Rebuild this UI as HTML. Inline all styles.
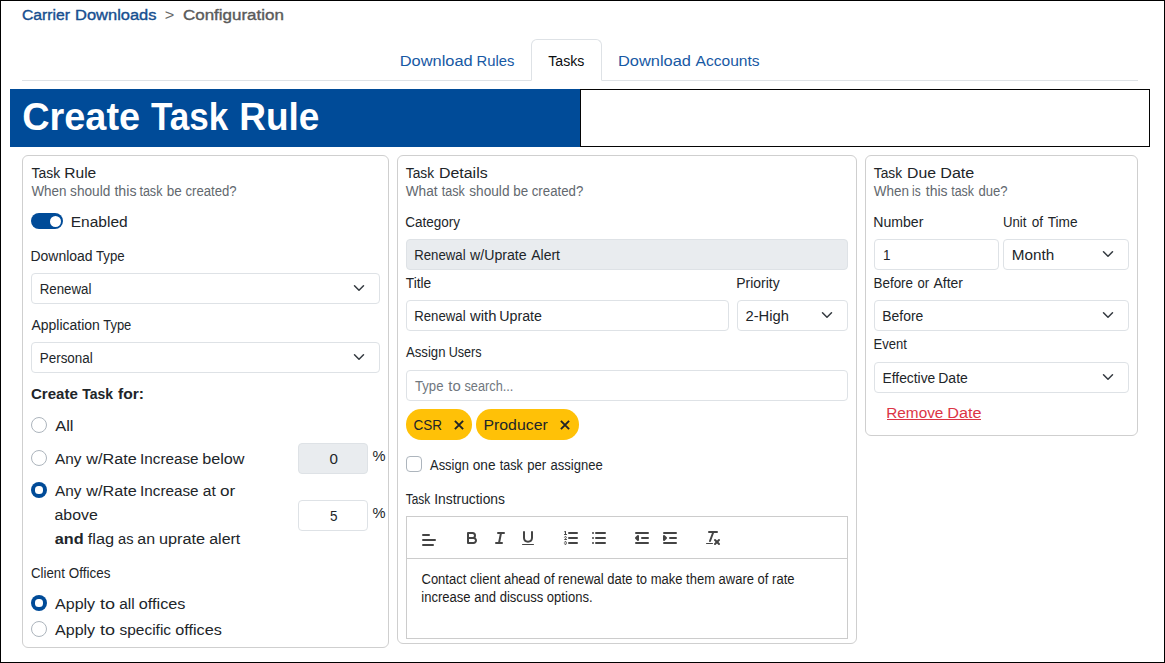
<!DOCTYPE html>
<html lang="en"><head><meta charset="utf-8"><title>Create Task Rule</title>
<style>
html,body{margin:0;padding:0;background:#fff;}
body{width:1165px;height:663px;position:relative;overflow:hidden;font-family:"Liberation Sans",sans-serif;}
#frame{position:absolute;left:0;top:0;width:1165px;height:663px;box-sizing:border-box;border:1px solid #000;z-index:5;pointer-events:none;}
.b{position:absolute;}
.t{position:absolute;white-space:nowrap;transform-origin:0 0;font-family:"Liberation Sans",sans-serif;}
.chev{position:absolute;right:12px;top:50%;margin-top:-7px;}
.qi{position:absolute;overflow:visible;}
</style></head>
<body>
<div id="frame"></div>
<div id="boxes">
<div class="b" style="left:22px;top:80px;width:1116px;height:1px;background:#dee2e6;"></div>
<div class="b" style="left:531px;top:39px;width:71px;height:42px;border:1px solid #dee2e6;border-bottom:1px solid #fff;border-radius:6px 6px 0 0;box-sizing:border-box;background:#fff;"></div>
<div class="b" style="left:10px;top:89px;width:570px;height:58px;background:#004b98;"></div>
<div class="b" style="left:580px;top:89px;width:570px;height:58px;border:1px solid #050505;box-sizing:border-box;background:#fff;"></div>
<div class="b" style="left:22px;top:155px;width:367px;height:493px;border:1px solid #cfcfcf;border-radius:6px;box-sizing:border-box;background:#fff;"></div>
<div class="b" style="left:397px;top:155px;width:460px;height:489px;border:1px solid #cfcfcf;border-radius:6px;box-sizing:border-box;background:#fff;"></div>
<div class="b" style="left:865px;top:155px;width:273px;height:281px;border:1px solid #cfcfcf;border-radius:6px;box-sizing:border-box;background:#fff;"></div>
<div class="b" style="left:31px;top:213px;width:32px;height:16px;background:#004b98;border-radius:8px;"><i style="position:absolute;left:19px;top:2.5px;width:11px;height:11px;border-radius:50%;background:#fff"></i></div>
<div class="b" style="left:31px;top:273px;width:349px;height:31px;border:1px solid #dee2e6;border-radius:4px;box-sizing:border-box;background:#fff;"><svg class="chev" viewBox="0 0 16 16" width="16" height="12"><path fill="none" stroke="#343a40" stroke-linecap="round" stroke-linejoin="round" stroke-width="2" d="m2 5 6 6 6-6"/></svg></div>
<div class="b" style="left:31px;top:342px;width:349px;height:31px;border:1px solid #dee2e6;border-radius:4px;box-sizing:border-box;background:#fff;"><svg class="chev" viewBox="0 0 16 16" width="16" height="12"><path fill="none" stroke="#343a40" stroke-linecap="round" stroke-linejoin="round" stroke-width="2" d="m2 5 6 6 6-6"/></svg></div>
<div class="b" style="left:31px;top:417px;width:16px;height:16px;border-radius:50%;background:#fff;border:1px solid #adb5bd;box-sizing:border-box;"></div>
<div class="b" style="left:31px;top:450px;width:16px;height:16px;border-radius:50%;background:#fff;border:1px solid #adb5bd;box-sizing:border-box;"></div>
<div class="b" style="left:31px;top:482px;width:16px;height:16px;border-radius:50%;background:#004b98;box-sizing:border-box;"><i style="position:absolute;left:4.4px;top:4.4px;width:7.2px;height:7.2px;border-radius:50%;background:#fff"></i></div>
<div class="b" style="left:298px;top:443px;width:70px;height:31px;border:1px solid #dee2e6;border-radius:4px;box-sizing:border-box;background:#e9ecef;"></div>
<div class="b" style="left:298px;top:500px;width:70px;height:31px;border:1px solid #dee2e6;border-radius:4px;box-sizing:border-box;background:#fff;"></div>
<div class="b" style="left:31px;top:595px;width:16px;height:16px;border-radius:50%;background:#004b98;box-sizing:border-box;"><i style="position:absolute;left:4.4px;top:4.4px;width:7.2px;height:7.2px;border-radius:50%;background:#fff"></i></div>
<div class="b" style="left:31px;top:621px;width:16px;height:16px;border-radius:50%;background:#fff;border:1px solid #adb5bd;box-sizing:border-box;"></div>
<div class="b" style="left:406px;top:239px;width:442px;height:31px;border:1px solid #dee2e6;border-radius:4px;box-sizing:border-box;background:#e9ecef;"></div>
<div class="b" style="left:406px;top:300px;width:323px;height:31px;border:1px solid #dee2e6;border-radius:4px;box-sizing:border-box;background:#fff;"></div>
<div class="b" style="left:737px;top:300px;width:111px;height:31px;border:1px solid #dee2e6;border-radius:4px;box-sizing:border-box;background:#fff;"><svg class="chev" viewBox="0 0 16 16" width="16" height="12"><path fill="none" stroke="#343a40" stroke-linecap="round" stroke-linejoin="round" stroke-width="2" d="m2 5 6 6 6-6"/></svg></div>
<div class="b" style="left:406px;top:370px;width:442px;height:31px;border:1px solid #dee2e6;border-radius:4px;box-sizing:border-box;background:#fff;"></div>
<div class="b" style="left:406px;top:409px;width:65.5px;height:30.5px;background:#ffc107;border-radius:15.25px;"><svg style="position:absolute;left:47.00px;top:9.95px" width="12" height="12" viewBox="0 0 12 12"><path d="M1.9 1.9 L10.1 10.1 M10.1 1.9 L1.9 10.1" stroke="#1f2327" stroke-width="1.9" stroke-linecap="butt" fill="none"/></svg></div>
<div class="b" style="left:475.5px;top:409px;width:103.5px;height:30.5px;background:#ffc107;border-radius:15.25px;"><svg style="position:absolute;left:83.50px;top:9.95px" width="12" height="12" viewBox="0 0 12 12"><path d="M1.9 1.9 L10.1 10.1 M10.1 1.9 L1.9 10.1" stroke="#1f2327" stroke-width="1.9" stroke-linecap="butt" fill="none"/></svg></div>
<div class="b" style="left:406px;top:456px;width:16px;height:16px;border:1px solid #adb5bd;border-radius:4px;box-sizing:border-box;background:#fff;"></div>
<div class="b" style="left:406px;top:516px;width:442px;height:43px;border:1px solid #ccc;box-sizing:border-box;background:#fff;"></div>
<div class="b" style="left:406px;top:558px;width:442px;height:81px;border:1px solid #ccc;box-sizing:border-box;background:#fff;"></div>
<svg class="qi" style="left:419.75px;top:531px" width="18" height="18" viewBox="0 0 18 18"><line fill="none" stroke="#444" stroke-linecap="round" stroke-linejoin="round" stroke-width="2" x1="3" x2="15" y1="9" y2="9"/><line fill="none" stroke="#444" stroke-linecap="round" stroke-linejoin="round" stroke-width="2" x1="3" x2="13" y1="14" y2="14"/><line fill="none" stroke="#444" stroke-linecap="round" stroke-linejoin="round" stroke-width="2" x1="3" x2="9" y1="4" y2="4"/></svg>
<svg class="qi" style="left:463px;top:528.75px" width="18" height="18" viewBox="0 0 18 18"><path fill="none" stroke="#444" stroke-linecap="round" stroke-linejoin="round" stroke-width="2" d="M5,4H9.5A2.5,2.5,0,0,1,12,6.5v0A2.5,2.5,0,0,1,9.5,9H5A0,0,0,0,1,5,9V4A0,0,0,0,1,5,4Z"/><path fill="none" stroke="#444" stroke-linecap="round" stroke-linejoin="round" stroke-width="2" d="M5,9h5.5A2.5,2.5,0,0,1,13,11.5v0A2.5,2.5,0,0,1,10.5,14H5a0,0,0,0,1,0,0V9A0,0,0,0,1,5,9Z"/></svg>
<svg class="qi" style="left:491px;top:528.75px" width="18" height="18" viewBox="0 0 18 18"><line fill="none" stroke="#444" stroke-linecap="round" stroke-linejoin="round" stroke-width="2" x1="7" x2="13" y1="4" y2="4"/><line fill="none" stroke="#444" stroke-linecap="round" stroke-linejoin="round" stroke-width="2" x1="5" x2="11" y1="14" y2="14"/><line fill="none" stroke="#444" stroke-linecap="round" stroke-linejoin="round" stroke-width="2" x1="8" x2="10" y1="14" y2="4"/></svg>
<svg class="qi" style="left:519px;top:528.75px" width="18" height="18" viewBox="0 0 18 18"><path fill="none" stroke="#444" stroke-linecap="round" stroke-linejoin="round" stroke-width="2" d="M5,3V9a4.012,4.012,0,0,0,8,0V3"/><rect fill="#444" height="1" rx="0.5" ry="0.5" width="12" x="3" y="15"/></svg>
<svg class="qi" style="left:562px;top:528.75px" width="18" height="18" viewBox="0 0 18 18"><line fill="none" stroke="#444" stroke-linecap="round" stroke-linejoin="round" stroke-width="2" x1="7" x2="15" y1="4" y2="4"/><line fill="none" stroke="#444" stroke-linecap="round" stroke-linejoin="round" stroke-width="2" x1="7" x2="15" y1="9" y2="9"/><line fill="none" stroke="#444" stroke-linecap="round" stroke-linejoin="round" stroke-width="2" x1="7" x2="15" y1="14" y2="14"/><line fill="none" stroke="#444" stroke-linecap="round" stroke-linejoin="round" stroke-width="1" x1="2.5" x2="4.5" y1="5.5" y2="5.5"/><path fill="#444" d="M3.5,6A0.5,0.5,0,0,1,3,5.5V3.085l-0.276.138A0.5,0.5,0,0,1,2.053,3c-0.124-.247-0.023-0.324.224-0.447l1-.5A0.5,0.5,0,0,1,4,2.5v3A0.5,0.5,0,0,1,3.5,6Z"/><path fill="none" stroke="#444" stroke-linecap="round" stroke-linejoin="round" stroke-width="1" d="M4.5,10.5h-2c0-.234,1.85-1.076,1.85-2.234A0.959,0.959,0,0,0,2.5,8.156"/><path fill="none" stroke="#444" stroke-linecap="round" stroke-linejoin="round" stroke-width="1" d="M2.5,14.846a0.959,0.959,0,0,0,1.85-.109A0.7,0.7,0,0,0,3.75,14a0.688,0.688,0,0,0,.6-0.736,0.959,0.959,0,0,0-1.85-.109"/></svg>
<svg class="qi" style="left:590px;top:528.75px" width="18" height="18" viewBox="0 0 18 18"><line fill="none" stroke="#444" stroke-linecap="round" stroke-linejoin="round" stroke-width="2" x1="6" x2="15" y1="4" y2="4"/><line fill="none" stroke="#444" stroke-linecap="round" stroke-linejoin="round" stroke-width="2" x1="6" x2="15" y1="9" y2="9"/><line fill="none" stroke="#444" stroke-linecap="round" stroke-linejoin="round" stroke-width="2" x1="6" x2="15" y1="14" y2="14"/><line fill="none" stroke="#444" stroke-linecap="round" stroke-linejoin="round" stroke-width="2" x1="3" x2="3" y1="4" y2="4"/><line fill="none" stroke="#444" stroke-linecap="round" stroke-linejoin="round" stroke-width="2" x1="3" x2="3" y1="9" y2="9"/><line fill="none" stroke="#444" stroke-linecap="round" stroke-linejoin="round" stroke-width="2" x1="3" x2="3" y1="14" y2="14"/></svg>
<svg class="qi" style="left:633px;top:528.75px" width="18" height="18" viewBox="0 0 18 18"><line fill="none" stroke="#444" stroke-linecap="round" stroke-linejoin="round" stroke-width="2" x1="3" x2="15" y1="14" y2="14"/><line fill="none" stroke="#444" stroke-linecap="round" stroke-linejoin="round" stroke-width="2" x1="3" x2="15" y1="4" y2="4"/><line fill="none" stroke="#444" stroke-linecap="round" stroke-linejoin="round" stroke-width="2" x1="9" x2="15" y1="9" y2="9"/><polyline fill="none" stroke="#444" stroke-linecap="round" stroke-linejoin="round" stroke-width="2" points="5 7 5 11 3 9 5 7"/></svg>
<svg class="qi" style="left:661px;top:528.75px" width="18" height="18" viewBox="0 0 18 18"><line fill="none" stroke="#444" stroke-linecap="round" stroke-linejoin="round" stroke-width="2" x1="3" x2="15" y1="14" y2="14"/><line fill="none" stroke="#444" stroke-linecap="round" stroke-linejoin="round" stroke-width="2" x1="3" x2="15" y1="4" y2="4"/><line fill="none" stroke="#444" stroke-linecap="round" stroke-linejoin="round" stroke-width="2" x1="9" x2="15" y1="9" y2="9"/><polyline fill="#444" stroke="#444" stroke-linecap="round" stroke-linejoin="round" stroke-width="2" points="3 7 3 11 5 9 3 7"/></svg>
<svg class="qi" style="left:704px;top:528.75px" width="18" height="18" viewBox="0 0 18 18"><line fill="none" stroke="#444" stroke-linecap="round" stroke-linejoin="round" stroke-width="2" x1="5" x2="13" y1="3" y2="3"/><line fill="none" stroke="#444" stroke-linecap="round" stroke-linejoin="round" stroke-width="2" x1="6" x2="9.35" y1="12" y2="3"/><line fill="none" stroke="#444" stroke-linecap="round" stroke-linejoin="round" stroke-width="2" x1="11" x2="15" y1="11" y2="15"/><line fill="none" stroke="#444" stroke-linecap="round" stroke-linejoin="round" stroke-width="2" x1="15" x2="11" y1="11" y2="15"/><rect fill="#444" height="1" rx="0.5" ry="0.5" width="7" x="2" y="14"/></svg>
<div class="b" style="left:874px;top:239px;width:125px;height:31px;border:1px solid #dee2e6;border-radius:4px;box-sizing:border-box;background:#fff;"></div>
<div class="b" style="left:1003px;top:239px;width:126px;height:31px;border:1px solid #dee2e6;border-radius:4px;box-sizing:border-box;background:#fff;"><svg class="chev" viewBox="0 0 16 16" width="16" height="12"><path fill="none" stroke="#343a40" stroke-linecap="round" stroke-linejoin="round" stroke-width="2" d="m2 5 6 6 6-6"/></svg></div>
<div class="b" style="left:874px;top:300px;width:255px;height:31px;border:1px solid #dee2e6;border-radius:4px;box-sizing:border-box;background:#fff;"><svg class="chev" viewBox="0 0 16 16" width="16" height="12"><path fill="none" stroke="#343a40" stroke-linecap="round" stroke-linejoin="round" stroke-width="2" d="m2 5 6 6 6-6"/></svg></div>
<div class="b" style="left:874px;top:362px;width:255px;height:31px;border:1px solid #dee2e6;border-radius:4px;box-sizing:border-box;background:#fff;"><svg class="chev" viewBox="0 0 16 16" width="16" height="12"><path fill="none" stroke="#343a40" stroke-linecap="round" stroke-linejoin="round" stroke-width="2" d="m2 5 6 6 6-6"/></svg></div>
<div class="b" style="left:887px;top:419px;width:94px;height:1px;background:#dc3545;"></div>
</div>
<div id="texts">
<div class="t" id="crumb1a" style="left:0;top:5px;font-size:15.5px;line-height:20px;font-weight:400;color:#174f90;transform:translateX(21.95px) scaleX(1.0125);-webkit-text-stroke:0.4px currentColor;">Carrier</div>
<div class="t" id="crumb1b" style="left:0;top:5px;font-size:15.5px;line-height:20px;font-weight:400;color:#174f90;transform:translateX(75.10px) scaleX(1.0611);-webkit-text-stroke:0.4px currentColor;">Downloads</div>
<div class="t" id="crumbgt" style="left:0;top:6px;font-size:14px;line-height:18px;font-weight:400;color:#6a6a6a;transform:translateX(164.75px) scaleX(1.1653);">&gt;</div>
<div class="t" id="crumb2" style="left:0;top:5px;font-size:15.5px;line-height:20px;font-weight:400;color:#5a5a5a;transform:translateX(182.95px) scaleX(1.0942);-webkit-text-stroke:0.4px currentColor;">Configuration</div>
<div class="t" id="tab11" style="left:0;top:51px;font-size:15.5px;line-height:20px;font-weight:400;color:#1759a4;transform:translateX(399.75px) scaleX(1.0585);">Download</div>
<div class="t" id="tab12" style="left:0;top:51px;font-size:15.5px;line-height:20px;font-weight:400;color:#1759a4;transform:translateX(476.50px) scaleX(0.9551);">Rules</div>
<div class="t" id="tab2" style="left:0;top:51px;font-size:15.5px;line-height:20px;font-weight:400;color:#0b0d0f;transform:translateX(548.25px) scaleX(0.9132);">Tasks</div>
<div class="t" id="tab31" style="left:0;top:51px;font-size:15.5px;line-height:20px;font-weight:400;color:#1759a4;transform:translateX(618.00px) scaleX(1.0587);">Download</div>
<div class="t" id="tab32" style="left:0;top:51px;font-size:15.5px;line-height:20px;font-weight:400;color:#1759a4;transform:translateX(695.50px) scaleX(1.0056);">Accounts</div>
<div class="t" id="title1" style="left:0;top:92px;font-size:39px;line-height:49px;font-weight:700;color:#ffffff;transform:translateX(22.25px) scaleX(0.9704);">Create</div>
<div class="t" id="title2" style="left:0;top:92px;font-size:39px;line-height:49px;font-weight:700;color:#ffffff;transform:translateX(151.05px) scaleX(0.8983);">Task</div>
<div class="t" id="title3" style="left:0;top:92px;font-size:39px;line-height:49px;font-weight:700;color:#ffffff;transform:translateX(239.20px) scaleX(0.9483);">Rule</div>
<div class="t" id="c1h1" style="left:0;top:163px;font-size:15.5px;line-height:20px;font-weight:400;color:#212529;transform:translateX(31.50px) scaleX(0.8977);">Task</div>
<div class="t" id="c1h2" style="left:0;top:163px;font-size:15.5px;line-height:20px;font-weight:400;color:#212529;transform:translateX(64.25px) scaleX(1.0046);">Rule</div>
<div class="t" id="c1s1" style="left:0;top:182px;font-size:14px;line-height:18px;font-weight:400;color:#62686e;transform:translateX(31.40px) scaleX(0.9589);">When</div>
<div class="t" id="c1s2" style="left:0;top:182px;font-size:14px;line-height:18px;font-weight:400;color:#62686e;transform:translateX(70.10px) scaleX(0.9757);">should</div>
<div class="t" id="c1s3" style="left:0;top:182px;font-size:14px;line-height:18px;font-weight:400;color:#62686e;transform:translateX(114.40px) scaleX(1.0129);">this</div>
<div class="t" id="c1s4" style="left:0;top:182px;font-size:14px;line-height:18px;font-weight:400;color:#62686e;transform:translateX(139.40px) scaleX(0.8966);">task</div>
<div class="t" id="c1s5" style="left:0;top:182px;font-size:14px;line-height:18px;font-weight:400;color:#62686e;transform:translateX(166.65px) scaleX(0.9618);">be</div>
<div class="t" id="c1s6" style="left:0;top:182px;font-size:14px;line-height:18px;font-weight:400;color:#62686e;transform:translateX(185.50px) scaleX(0.9380);">created?</div>
<div class="t" id="enabled" style="left:0;top:212px;font-size:15.5px;line-height:20px;font-weight:400;color:#212529;transform:translateX(70.75px) scaleX(1.0013);">Enabled</div>
<div class="t" id="dltype1" style="left:0;top:247px;font-size:14px;line-height:18px;font-weight:400;color:#212529;transform:translateX(30.50px) scaleX(0.9965);">Download</div>
<div class="t" id="dltype2" style="left:0;top:247px;font-size:14px;line-height:18px;font-weight:400;color:#212529;transform:translateX(96.00px) scaleX(0.9443);">Type</div>
<div class="t" id="renewal" style="left:0;top:280px;font-size:14px;line-height:18px;font-weight:400;color:#212529;transform:translateX(39.75px) scaleX(0.9484);">Renewal</div>
<div class="t" id="apptype1" style="left:0;top:316px;font-size:14px;line-height:18px;font-weight:400;color:#212529;transform:translateX(31.50px) scaleX(0.9981);">Application</div>
<div class="t" id="apptype2" style="left:0;top:316px;font-size:14px;line-height:18px;font-weight:400;color:#212529;transform:translateX(103.25px) scaleX(0.9239);">Type</div>
<div class="t" id="personal" style="left:0;top:349px;font-size:14px;line-height:18px;font-weight:400;color:#212529;transform:translateX(39.75px) scaleX(0.9586);">Personal</div>
<div class="t" id="ctf1" style="left:0;top:384px;font-size:15.5px;line-height:20px;font-weight:700;color:#212529;transform:translateX(31.00px) scaleX(0.9711);">Create</div>
<div class="t" id="ctf2" style="left:0;top:384px;font-size:15.5px;line-height:20px;font-weight:700;color:#212529;transform:translateX(82.25px) scaleX(0.9021);">Task</div>
<div class="t" id="ctf3" style="left:0;top:384px;font-size:15.5px;line-height:20px;font-weight:700;color:#212529;transform:translateX(118.00px) scaleX(1.0083);">for:</div>
<div class="t" id="all" style="left:0;top:416px;font-size:15.5px;line-height:20px;font-weight:400;color:#212529;transform:translateX(55.25px) scaleX(1.0606);">All</div>
<div class="t" id="below1" style="left:0;top:449px;font-size:15.5px;line-height:20px;font-weight:400;color:#212529;transform:translateX(55.00px) scaleX(0.9889);">Any</div>
<div class="t" id="below2" style="left:0;top:449px;font-size:15.5px;line-height:20px;font-weight:400;color:#212529;transform:translateX(86.25px) scaleX(1.0453);">w/Rate</div>
<div class="t" id="below3" style="left:0;top:449px;font-size:15.5px;line-height:20px;font-weight:400;color:#212529;transform:translateX(140.00px) scaleX(0.9855);">Increase</div>
<div class="t" id="below4" style="left:0;top:449px;font-size:15.5px;line-height:20px;font-weight:400;color:#212529;transform:translateX(202.25px) scaleX(1.0448);">below</div>
<div class="t" id="ator1" style="left:0;top:481px;font-size:15.5px;line-height:20px;font-weight:400;color:#212529;transform:translateX(55.00px) scaleX(0.9889);">Any</div>
<div class="t" id="ator2" style="left:0;top:481px;font-size:15.5px;line-height:20px;font-weight:400;color:#212529;transform:translateX(86.25px) scaleX(1.0453);">w/Rate</div>
<div class="t" id="ator3" style="left:0;top:481px;font-size:15.5px;line-height:20px;font-weight:400;color:#212529;transform:translateX(140.00px) scaleX(0.9855);">Increase</div>
<div class="t" id="ator4" style="left:0;top:481px;font-size:15.5px;line-height:20px;font-weight:400;color:#212529;transform:translateX(202.75px) scaleX(1.0070);">at</div>
<div class="t" id="ator5" style="left:0;top:481px;font-size:15.5px;line-height:20px;font-weight:400;color:#212529;transform:translateX(220.00px) scaleX(1.1048);">or</div>
<div class="t" id="above" style="left:0;top:505px;font-size:15.5px;line-height:20px;font-weight:400;color:#212529;transform:translateX(54.50px) scaleX(1.0250);">above</div>
<div class="t" id="and" style="left:0;top:529px;font-size:15.5px;line-height:20px;font-weight:700;color:#212529;transform:translateX(54.75px) scaleX(1.0481);">and</div>
<div class="t" id="flag1" style="left:0;top:529px;font-size:15.5px;line-height:20px;font-weight:400;color:#212529;transform:translateX(87.75px) scaleX(1.0526);">flag</div>
<div class="t" id="flag2" style="left:0;top:529px;font-size:15.5px;line-height:20px;font-weight:400;color:#212529;transform:translateX(118.00px) scaleX(0.9440);">as</div>
<div class="t" id="flag3" style="left:0;top:529px;font-size:15.5px;line-height:20px;font-weight:400;color:#212529;transform:translateX(137.25px) scaleX(1.0323);">an</div>
<div class="t" id="flag4" style="left:0;top:529px;font-size:15.5px;line-height:20px;font-weight:400;color:#212529;transform:translateX(159.00px) scaleX(1.0498);">uprate</div>
<div class="t" id="flag5" style="left:0;top:529px;font-size:15.5px;line-height:20px;font-weight:400;color:#212529;transform:translateX(209.25px) scaleX(1.0275);">alert</div>
<div class="t" id="v0" style="left:0;top:450px;font-size:14px;line-height:18px;font-weight:400;color:#212529;transform:translateX(329.60px) scaleX(1.0839);">0</div>
<div class="t" id="pct0" style="left:0;top:446px;font-size:15.5px;line-height:20px;font-weight:400;color:#212529;transform:translateX(372.50px) scaleX(0.9446);">%</div>
<div class="t" id="v5" style="left:0;top:507px;font-size:14px;line-height:18px;font-weight:400;color:#212529;transform:translateX(329.95px) scaleX(0.9651);">5</div>
<div class="t" id="pct5" style="left:0;top:503px;font-size:15.5px;line-height:20px;font-weight:400;color:#212529;transform:translateX(372.50px) scaleX(0.9446);">%</div>
<div class="t" id="coff1" style="left:0;top:564px;font-size:14px;line-height:18px;font-weight:400;color:#212529;transform:translateX(31.00px) scaleX(0.9448);">Client</div>
<div class="t" id="coff2" style="left:0;top:564px;font-size:14px;line-height:18px;font-weight:400;color:#212529;transform:translateX(68.75px) scaleX(0.9615);">Offices</div>
<div class="t" id="applyall1" style="left:0;top:594px;font-size:15.5px;line-height:20px;font-weight:400;color:#212529;transform:translateX(55.00px) scaleX(1.0352);">Apply</div>
<div class="t" id="applyall2" style="left:0;top:594px;font-size:15.5px;line-height:20px;font-weight:400;color:#212529;transform:translateX(100.00px) scaleX(1.1636);">to</div>
<div class="t" id="applyall3" style="left:0;top:594px;font-size:15.5px;line-height:20px;font-weight:400;color:#212529;transform:translateX(119.25px) scaleX(0.9937);">all</div>
<div class="t" id="applyall4" style="left:0;top:594px;font-size:15.5px;line-height:20px;font-weight:400;color:#212529;transform:translateX(138.75px) scaleX(1.0486);">offices</div>
<div class="t" id="applyspec1" style="left:0;top:620px;font-size:15.5px;line-height:20px;font-weight:400;color:#212529;transform:translateX(55.00px) scaleX(1.0352);">Apply</div>
<div class="t" id="applyspec2" style="left:0;top:620px;font-size:15.5px;line-height:20px;font-weight:400;color:#212529;transform:translateX(100.00px) scaleX(1.1636);">to</div>
<div class="t" id="applyspec3" style="left:0;top:620px;font-size:15.5px;line-height:20px;font-weight:400;color:#212529;transform:translateX(119.50px) scaleX(0.9981);">specific</div>
<div class="t" id="applyspec4" style="left:0;top:620px;font-size:15.5px;line-height:20px;font-weight:400;color:#212529;transform:translateX(175.25px) scaleX(1.0475);">offices</div>
<div class="t" id="c2h1" style="left:0;top:163px;font-size:15.5px;line-height:20px;font-weight:400;color:#212529;transform:translateX(405.75px) scaleX(0.8889);">Task</div>
<div class="t" id="c2h2" style="left:0;top:163px;font-size:15.5px;line-height:20px;font-weight:400;color:#212529;transform:translateX(439.00px) scaleX(1.0264);">Details</div>
<div class="t" id="c2s1" style="left:0;top:182px;font-size:14px;line-height:18px;font-weight:400;color:#62686e;transform:translateX(405.75px) scaleX(0.9740);">What</div>
<div class="t" id="c2s2" style="left:0;top:182px;font-size:14px;line-height:18px;font-weight:400;color:#62686e;transform:translateX(441.75px) scaleX(0.8953);">task</div>
<div class="t" id="c2s3" style="left:0;top:182px;font-size:14px;line-height:18px;font-weight:400;color:#62686e;transform:translateX(469.25px) scaleX(0.9758);">should</div>
<div class="t" id="c2s4" style="left:0;top:182px;font-size:14px;line-height:18px;font-weight:400;color:#62686e;transform:translateX(513.25px) scaleX(0.9538);">be</div>
<div class="t" id="c2s5" style="left:0;top:182px;font-size:14px;line-height:18px;font-weight:400;color:#62686e;transform:translateX(531.75px) scaleX(0.9452);">created?</div>
<div class="t" id="cat" style="left:0;top:213px;font-size:14px;line-height:18px;font-weight:400;color:#212529;transform:translateX(405.25px) scaleX(0.9656);">Category</div>
<div class="t" id="catv1" style="left:0;top:246px;font-size:14px;line-height:18px;font-weight:400;color:#212529;transform:translateX(414.25px) scaleX(0.9418);">Renewal</div>
<div class="t" id="catv2" style="left:0;top:246px;font-size:14px;line-height:18px;font-weight:400;color:#212529;transform:translateX(470.00px) scaleX(1.0118);">w/Uprate</div>
<div class="t" id="catv3" style="left:0;top:246px;font-size:14px;line-height:18px;font-weight:400;color:#212529;transform:translateX(531.25px) scaleX(0.9986);">Alert</div>
<div class="t" id="titlel" style="left:0;top:274px;font-size:14px;line-height:18px;font-weight:400;color:#212529;transform:translateX(405.75px) scaleX(0.9809);">Title</div>
<div class="t" id="prio" style="left:0;top:274px;font-size:14px;line-height:18px;font-weight:400;color:#212529;transform:translateX(736.25px) scaleX(0.9952);">Priority</div>
<div class="t" id="titlev1" style="left:0;top:307px;font-size:14px;line-height:18px;font-weight:400;color:#212529;transform:translateX(414.25px) scaleX(0.9418);">Renewal</div>
<div class="t" id="titlev2" style="left:0;top:307px;font-size:14px;line-height:18px;font-weight:400;color:#212529;transform:translateX(470.00px) scaleX(1.0595);">with</div>
<div class="t" id="titlev3" style="left:0;top:307px;font-size:14px;line-height:18px;font-weight:400;color:#212529;transform:translateX(499.25px) scaleX(1.0141);">Uprate</div>
<div class="t" id="priov" style="left:0;top:307px;font-size:14px;line-height:18px;font-weight:400;color:#212529;transform:translateX(745.50px) scaleX(1.0525);">2-High</div>
<div class="t" id="assign1" style="left:0;top:343px;font-size:14px;line-height:18px;font-weight:400;color:#212529;transform:translateX(406.00px) scaleX(0.9392);">Assign</div>
<div class="t" id="assign2" style="left:0;top:343px;font-size:14px;line-height:18px;font-weight:400;color:#212529;transform:translateX(448.75px) scaleX(0.8980);">Users</div>
<div class="t" id="search1" style="left:0;top:377px;font-size:14px;line-height:18px;font-weight:400;color:#70777e;transform:translateX(415.00px) scaleX(0.9386);">Type</div>
<div class="t" id="search2" style="left:0;top:377px;font-size:14px;line-height:18px;font-weight:400;color:#70777e;transform:translateX(448.25px) scaleX(1.0647);">to</div>
<div class="t" id="search3" style="left:0;top:377px;font-size:14px;line-height:18px;font-weight:400;color:#70777e;transform:translateX(464.50px) scaleX(0.9105);">search...</div>
<div class="t" id="csr" style="left:0;top:415px;font-size:15.5px;line-height:20px;font-weight:400;color:#212529;transform:translateX(413.50px) scaleX(0.8698);">CSR</div>
<div class="t" id="producer" style="left:0;top:415px;font-size:15.5px;line-height:20px;font-weight:400;color:#212529;transform:translateX(483.50px) scaleX(1.0207);">Producer</div>
<div class="t" id="onetask1" style="left:0;top:456px;font-size:14px;line-height:18px;font-weight:400;color:#212529;transform:translateX(430.00px) scaleX(0.9241);">Assign</div>
<div class="t" id="onetask2" style="left:0;top:456px;font-size:14px;line-height:18px;font-weight:400;color:#212529;transform:translateX(472.75px) scaleX(0.9745);">one</div>
<div class="t" id="onetask3" style="left:0;top:456px;font-size:14px;line-height:18px;font-weight:400;color:#212529;transform:translateX(499.75px) scaleX(0.8953);">task</div>
<div class="t" id="onetask4" style="left:0;top:456px;font-size:14px;line-height:18px;font-weight:400;color:#212529;transform:translateX(527.25px) scaleX(0.9335);">per</div>
<div class="t" id="onetask5" style="left:0;top:456px;font-size:14px;line-height:18px;font-weight:400;color:#212529;transform:translateX(550.50px) scaleX(0.9303);">assignee</div>
<div class="t" id="instr1" style="left:0;top:490px;font-size:14px;line-height:18px;font-weight:400;color:#212529;transform:translateX(405.75px) scaleX(0.8463);">Task</div>
<div class="t" id="instr2" style="left:0;top:490px;font-size:14px;line-height:18px;font-weight:400;color:#212529;transform:translateX(434.25px) scaleX(0.9881);">Instructions</div>
<div class="t" id="ed1" style="left:0;top:570px;font-size:14px;line-height:18px;font-weight:400;color:#1c1c1c;transform:translateX(421.50px) scaleX(0.9288);">Contact client ahead of renewal date to make them aware of rate</div>
<div class="t" id="ed2" style="left:0;top:588px;font-size:14px;line-height:18px;font-weight:400;color:#1c1c1c;transform:translateX(421.25px) scaleX(0.9329);">increase and discuss options.</div>
<div class="t" id="c3h1" style="left:0;top:163px;font-size:15.5px;line-height:20px;font-weight:400;color:#212529;transform:translateX(873.75px) scaleX(0.8889);">Task</div>
<div class="t" id="c3h2" style="left:0;top:163px;font-size:15.5px;line-height:20px;font-weight:400;color:#212529;transform:translateX(907.00px) scaleX(1.0197);">Due</div>
<div class="t" id="c3h3" style="left:0;top:163px;font-size:15.5px;line-height:20px;font-weight:400;color:#212529;transform:translateX(940.25px) scaleX(1.0409);">Date</div>
<div class="t" id="c3s1" style="left:0;top:182px;font-size:14px;line-height:18px;font-weight:400;color:#62686e;transform:translateX(873.75px) scaleX(0.9632);">When</div>
<div class="t" id="c3s2" style="left:0;top:182px;font-size:14px;line-height:18px;font-weight:400;color:#62686e;transform:translateX(912.05px) scaleX(0.8467);">is</div>
<div class="t" id="c3s3" style="left:0;top:182px;font-size:14px;line-height:18px;font-weight:400;color:#62686e;transform:translateX(925.75px) scaleX(1.0013);">this</div>
<div class="t" id="c3s4" style="left:0;top:182px;font-size:14px;line-height:18px;font-weight:400;color:#62686e;transform:translateX(951.25px) scaleX(0.8854);">task</div>
<div class="t" id="c3s5" style="left:0;top:182px;font-size:14px;line-height:18px;font-weight:400;color:#62686e;transform:translateX(978.50px) scaleX(0.9343);">due?</div>
<div class="t" id="num" style="left:0;top:213px;font-size:14px;line-height:18px;font-weight:400;color:#212529;transform:translateX(873.25px) scaleX(1.0065);">Number</div>
<div class="t" id="unit1" style="left:0;top:213px;font-size:14px;line-height:18px;font-weight:400;color:#212529;transform:translateX(1003.00px) scaleX(0.9407);">Unit</div>
<div class="t" id="unit2" style="left:0;top:213px;font-size:14px;line-height:18px;font-weight:400;color:#212529;transform:translateX(1031.75px) scaleX(0.9697);">of</div>
<div class="t" id="unit3" style="left:0;top:213px;font-size:14px;line-height:18px;font-weight:400;color:#212529;transform:translateX(1047.75px) scaleX(0.9751);">Time</div>
<div class="t" id="numv" style="left:0;top:246px;font-size:14px;line-height:18px;font-weight:400;color:#212529;transform:translateX(883.00px) scaleX(0.9601);">1</div>
<div class="t" id="month" style="left:0;top:246px;font-size:14px;line-height:18px;font-weight:400;color:#212529;transform:translateX(1011.75px) scaleX(1.0897);">Month</div>
<div class="t" id="boa1" style="left:0;top:274px;font-size:14px;line-height:18px;font-weight:400;color:#212529;transform:translateX(873.50px) scaleX(0.9581);">Before</div>
<div class="t" id="boa2" style="left:0;top:274px;font-size:14px;line-height:18px;font-weight:400;color:#212529;transform:translateX(917.50px) scaleX(0.9353);">or</div>
<div class="t" id="boa3" style="left:0;top:274px;font-size:14px;line-height:18px;font-weight:400;color:#212529;transform:translateX(933.50px) scaleX(0.9945);">After</div>
<div class="t" id="before" style="left:0;top:307px;font-size:14px;line-height:18px;font-weight:400;color:#212529;transform:translateX(882.25px) scaleX(0.9947);">Before</div>
<div class="t" id="event" style="left:0;top:335px;font-size:14px;line-height:18px;font-weight:400;color:#212529;transform:translateX(873.50px) scaleX(0.9287);">Event</div>
<div class="t" id="effdate1" style="left:0;top:369px;font-size:14px;line-height:18px;font-weight:400;color:#212529;transform:translateX(882.50px) scaleX(0.9880);">Effective</div>
<div class="t" id="effdate2" style="left:0;top:369px;font-size:14px;line-height:18px;font-weight:400;color:#212529;transform:translateX(938.25px) scaleX(0.9994);">Date</div>
<div class="t" id="remove1" style="left:0;top:403px;font-size:15.5px;line-height:20px;font-weight:400;color:#dc3545;transform:translateX(886.25px) scaleX(0.9893);">Remove</div>
<div class="t" id="remove2" style="left:0;top:403px;font-size:15.5px;line-height:20px;font-weight:400;color:#dc3545;transform:translateX(947.25px) scaleX(1.0460);">Date</div>
</div>
</body></html>
